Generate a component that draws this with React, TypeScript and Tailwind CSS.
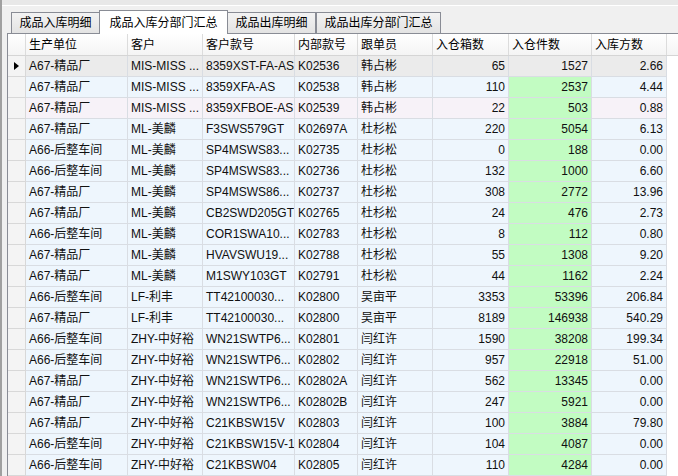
import React from 'react';

const font = "font-['Liberation_Sans','Noto_Sans_CJK_SC',sans-serif]";

const columns = [
  { title: '生产单位', w: 'w-[102px]', right: false },
  { title: '客户', w: 'w-[75px]', right: false },
  { title: '客户款号', w: 'w-[92px]', right: false },
  { title: '内部款号', w: 'w-[63px]', right: false },
  { title: '跟单员', w: 'w-[75px]', right: false },
  { title: '入仓箱数', w: 'w-[76px]', right: true },
  { title: '入仓件数', w: 'w-[83px]', right: true },
  { title: '入库方数', w: 'w-[75px]', right: true },
];

const rows = [
  ['A67-精品厂', 'MIS-MISS ...', '8359XST-FA-AS', 'K02536', '韩占彬', '65', '1527', '2.66'],
  ['A67-精品厂', 'MIS-MISS ...', '8359XFA-AS', 'K02538', '韩占彬', '110', '2537', '4.44'],
  ['A67-精品厂', 'MIS-MISS ...', '8359XFBOE-AS', 'K02539', '韩占彬', '22', '503', '0.88'],
  ['A67-精品厂', 'ML-美麟', 'F3SWS579GT', 'K02697A', '杜杉松', '220', '5054', '6.13'],
  ['A66-后整车间', 'ML-美麟', 'SP4MSWS83...', 'K02735', '杜杉松', '0', '188', '0.00'],
  ['A66-后整车间', 'ML-美麟', 'SP4MSWS83...', 'K02736', '杜杉松', '132', '1000', '6.60'],
  ['A67-精品厂', 'ML-美麟', 'SP4MSWS86...', 'K02737', '杜杉松', '308', '2772', '13.96'],
  ['A67-精品厂', 'ML-美麟', 'CB2SWD205GT', 'K02765', '杜杉松', '24', '476', '2.73'],
  ['A66-后整车间', 'ML-美麟', 'COR1SWA10...', 'K02783', '杜杉松', '8', '112', '0.80'],
  ['A67-精品厂', 'ML-美麟', 'HVAVSWU19...', 'K02788', '杜杉松', '55', '1308', '9.20'],
  ['A67-精品厂', 'ML-美麟', 'M1SWY103GT', 'K02791', '杜杉松', '44', '1162', '2.24'],
  ['A66-后整车间', 'LF-利丰', 'TT42100030...', 'K02800', '吴亩平', '3353', '53396', '206.84'],
  ['A67-精品厂', 'LF-利丰', 'TT42100030...', 'K02800', '吴亩平', '8189', '146938', '540.29'],
  ['A66-后整车间', 'ZHY-中好裕', 'WN21SWTP6...', 'K02801', '闫红许', '1590', '38208', '199.34'],
  ['A66-后整车间', 'ZHY-中好裕', 'WN21SWTP6...', 'K02802', '闫红许', '957', '22918', '51.00'],
  ['A67-精品厂', 'ZHY-中好裕', 'WN21SWTP6...', 'K02802A', '闫红许', '562', '13345', '0.00'],
  ['A67-精品厂', 'ZHY-中好裕', 'WN21SWTP6...', 'K02802B', '闫红许', '247', '5921', '0.00'],
  ['A67-精品厂', 'ZHY-中好裕', 'C21KBSW15V', 'K02803', '闫红许', '100', '3884', '79.80'],
  ['A66-后整车间', 'ZHY-中好裕', 'C21KBSW15V-1', 'K02804', '闫红许', '104', '4087', '0.00'],
  ['A66-后整车间', 'ZHY-中好裕', 'C21KBSW04', 'K02805', '闫红许', '110', '4284', '0.00'],
  // the next row only peeks in by one pixel row, so its texts stay empty
  ['', '', '', '', '', '', '', ''],
];

const tabs = ['成品入库明细', '成品入库分部门汇总', '成品出库明细', '成品出库分部门汇总'];

function Tabs() {
  return (
    <div className="flex items-end h-[27px] pl-[4px]">
      {tabs.map((t, i) =>
        i === 1 ? (
          <div
            key={t}
            className="relative z-10 -mb-px w-[129px] h-[24px] bg-white border border-b-0 border-[#898c95] flex items-center justify-center text-[12px] text-black"
          >
            {t}
          </div>
        ) : (
          <div
            key={t}
            className={`${i === 3 ? 'w-[125px]' : 'w-[88px]'} h-[21px] bg-gradient-to-b from-[#f3f3f3] to-[#e3e3e3] border border-b-0 border-[#898c95] flex items-center justify-center text-[12px] text-black ${i === 2 ? 'border-l-0' : ''} ${i === 0 ? 'border-r-0' : ''}`}
          >
            {t}
          </div>
        )
      )}
    </div>
  );
}

function Indicator() {
  return (
    <svg width="5" height="8" viewBox="0 0 5 8">
      <path d="M0 0 L5 4 L0 8 Z" fill="#000" />
    </svg>
  );
}

function Grid() {
  return (
    <div className="flex-1 border-t border-l border-[#898c95] bg-white overflow-hidden">
      {/* header */}
      <div className="flex h-[22px] border-b border-[#d5d5d5] bg-gradient-to-b from-white to-[#f4f4f4]">
        <div className="w-[18px] shrink-0 border-r border-[#dcdcdc]" />
        {columns.map((c) => (
          <div
            key={c.title}
            className={`${c.w} shrink-0 border-r border-[#dcdcdc] pl-[3px] flex items-center text-[12px] text-black`}
          >
            {c.title}
          </div>
        ))}
        <div className="flex-1" />
      </div>
      {rows.map((r, ri) => {
        const focused = ri === 0;
        const rowBg = focused ? 'bg-[#ebebeb]' : ri === 2 ? 'bg-[#f7f2f8]' : 'bg-[#eef6fd]';
        return (
          <div key={ri} className="flex h-[21px]">
            <div className="w-[18px] shrink-0 border-r border-b border-[#d8d8d8] bg-[#f4f4f4] flex items-center justify-center">
              {focused && <Indicator />}
            </div>
            {r.map((v, ci) => {
              const c = columns[ci];
              const green = ci === 6 && !focused;
              return (
                <div
                  key={ci}
                  className={`${c.w} shrink-0 border-r border-b border-[#d9dde3] flex items-center text-[12px] text-[#101010] whitespace-nowrap overflow-hidden ${
                    c.right ? 'justify-end pr-[3px]' : 'pl-[3px]'
                  } ${green ? 'bg-[#c2fcc2]' : rowBg}`}
                >
                  {v}
                </div>
              );
            })}
            <div className="flex-1 bg-white" />
          </div>
        );
      })}
    </div>
  );
}

export default function App() {
  return (
    <div className={`w-[678px] h-[476px] overflow-hidden bg-[#f0f0f0] border-l-2 border-[#a0a0a0] flex flex-col ${font}`}>
      <div className="h-[6px] shrink-0 bg-[#e8e8e8] border-b border-white" />
      <div className="flex-1 flex flex-col pl-[5px] min-h-0">
        <Tabs />
        <Grid />
      </div>
    </div>
  );
}
